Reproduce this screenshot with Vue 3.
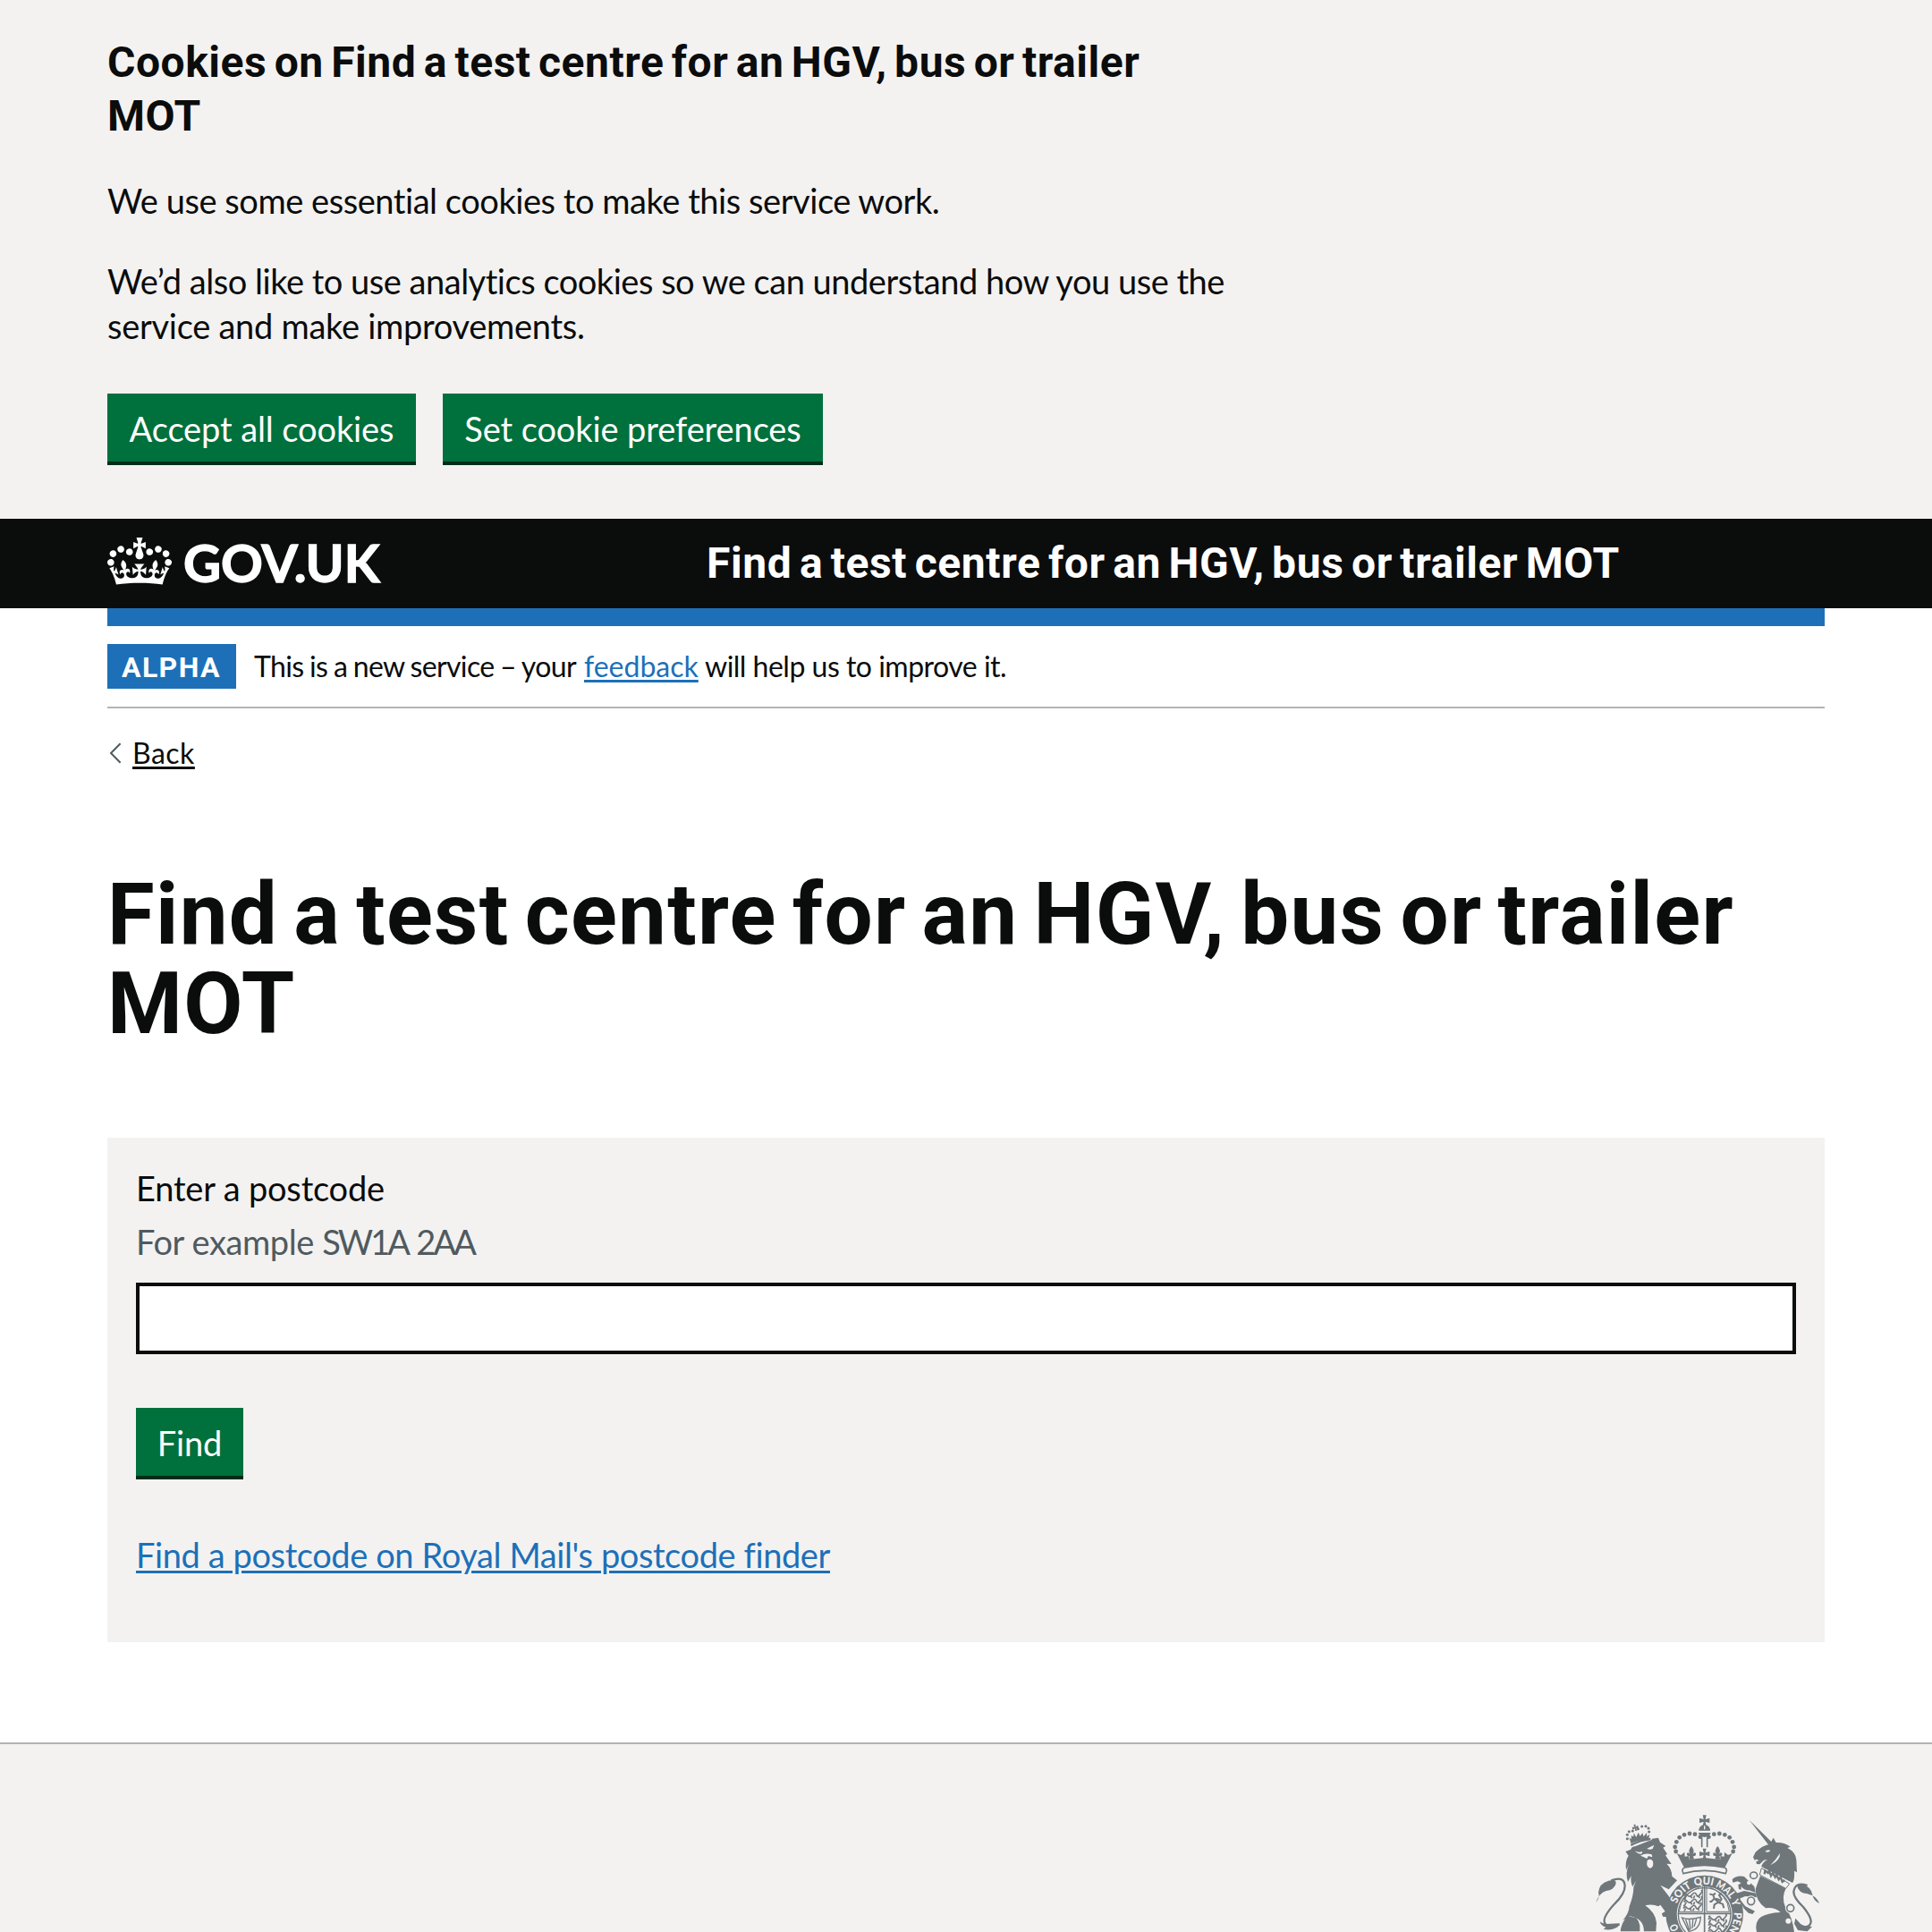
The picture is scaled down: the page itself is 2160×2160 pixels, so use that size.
<script setup>
const serviceName = 'Find a test centre for an HGV, bus or trailer MOT'

// Pearls of the royal crown, left half; the right half is mirrored
const pearls = [[423, 131], [405, 122], [387, 120], [369, 124], [353, 133], [343, 148], [338, 165], [341, 180]]
const lionPearls = [[178, 137], [178, 124], [184, 113], [196, 111], [214, 104], [227, 96], [240, 95], [249, 102], [251, 114]]

// Motto words: offset along the garter, and length
const motto = [
  { word: 'O', at: 102, length: 23 },
  { word: 'SOIT', at: 190, length: 76 },
  { word: 'QUI', at: 277, length: 62 },
  { word: 'MAL', at: 347, length: 66 },
  { word: 'Y', at: 419, length: 22 },
  { word: 'PEN', at: 460, length: 66 }
]
</script>

<template>
  <div class="page">
    <section class="cookies">
      <h2>Cookies on Find a test centre for an HGV, bus or trailer<br>MOT</h2>
      <p class="c1">We use some essential cookies to make this service work.</p>
      <p class="c2">We’d also like to use analytics cookies so we can understand how you use the<br><span class="c3">service and make improvements.</span></p>
      <div class="actions">
        <button class="button accept">Accept all cookies</button>
        <button class="button prefs">Set cookie preferences</button>
      </div>
    </section>

    <header class="header">
      <a class="logo">
        <svg class="crown" viewBox="0 0 132 97" width="72" height="53" fill="#fff" fill-rule="evenodd">
          <path d="M25 30.2c3.5 1.5 7.7-.2 9.1-3.7 1.5-3.6-.2-7.8-3.9-9.2-3.6-1.4-7.6.3-9.1 3.9-1.4 3.5.3 7.5 3.9 9zM9 39.5c3.6 1.5 7.8-.2 9.2-3.7 1.5-3.6-.2-7.8-3.9-9.1-3.6-1.5-7.6.2-9.1 3.8-1.4 3.5.3 7.5 3.8 9zM4.4 57.2c3.5 1.5 7.7-.2 9.1-3.8 1.5-3.6-.2-7.7-3.9-9.1-3.5-1.5-7.6.3-9.1 3.8-1.4 3.5.3 7.6 3.9 9.1zm38.3-21.4c3.5 1.5 7.7-.2 9.1-3.8 1.5-3.6-.2-7.7-3.9-9.1-3.6-1.5-7.6.3-9.1 3.8-1.3 3.6.4 7.7 3.9 9.1zm64.4-5.6c-3.6 1.5-7.8-.2-9.1-3.7-1.5-3.6.2-7.8 3.8-9.2 3.6-1.4 7.7.3 9.2 3.9 1.3 3.5-.4 7.5-3.9 9zm15.9 9.3c-3.6 1.5-7.7-.2-9.1-3.7-1.5-3.6.2-7.8 3.7-9.1 3.6-1.5 7.7.2 9.2 3.8 1.5 3.5-.3 7.5-3.8 9zm4.7 17.7c-3.6 1.5-7.8-.2-9.2-3.8-1.5-3.6.2-7.7 3.9-9.1 3.6-1.5 7.7.3 9.2 3.8 1.3 3.5-.4 7.6-3.9 9.1zM89.3 35.8c-3.6 1.5-7.8-.2-9.2-3.8-1.4-3.6.2-7.7 3.9-9.1 3.6-1.5 7.7.3 9.2 3.8 1.4 3.6-.3 7.7-3.9 9.1zM69.7 17.7l8.9 4.7V9.3l-8.9 2.8c-.2-.3-.5-.6-.9-.9L72.4 0H59.6l3.5 11.2c-.3.3-.6.5-.9.9l-8.8-2.8v13.1l8.8-4.7c.3.3.6.7.9.9l-5 15.4v.1c-.2.8-.4 1.6-.4 2.4 0 4.1 3.1 7.5 7 8.1h.2c.3 0 .7.1 1 .1.4 0 .7 0 1-.1h.2c4-.6 7.1-4.1 7.1-8.1 0-.8-.1-1.7-.4-2.4V34l-5.1-15.4c.4-.2.7-.6 1-.9zM66 92.8c16.9 0 32.8 1.1 47.1 3.2 4-16.9 8.9-26.7 14-33.5l-9.6-3.4c1 4.9 1.1 7.2 0 10.2-1.5-1.4-3-4.3-4.2-8.7L108.6 76c2.8-2 5-3.2 7.5-3.3-4.4 9.4-10 11.9-13.6 11.2-4.3-.8-6.3-4.6-5.6-7.9 1-4.7 5.7-5.9 8-.5 4.3-8.7-3-11.4-7.6-8.8 7.1-7.2 7.9-13.5 2.1-21.1-8 6.1-8.1 12.3-4.5 20.8-4.7-5.4-12.1-2.5-9.5 6.2 3.4-5.2 7.9-2 7.2 3.1-.6 4.3-6.4 7.8-13.5 7.2-10.3-.9-10.9-8-11.2-13.8 2.5-.5 7.1 1.8 11 7.3L80.2 60c-4.1 4.4-8 5.3-12.3 5.4 1.4-4.4 8-11.6 8-11.6H55.5s6.4 7.2 7.9 11.6c-4.2-.1-8-1-12.3-5.4l1.4 16.4c3.9-5.5 8.5-7.7 10.9-7.3-.3 5.8-.9 12.8-11.1 13.8-7.2.6-12.9-2.9-13.5-7.2-.7-5 3.8-8.3 7.1-3.1 2.7-8.7-4.6-11.6-9.4-6.2 3.7-8.5 3.6-14.7-4.6-20.8-5.8 7.6-5 13.9 2.2 21.1-4.7-2.6-11.9.1-7.7 8.8 2.3-5.5 7.1-4.2 8.1.5.7 3.3-1.3 7.1-5.7 7.9-3.5.7-9-1.8-13.5-11.2 2.5.1 4.7 1.3 7.5 3.3l-4.7-15.4c-1.2 4.4-2.7 7.2-4.3 8.7-1.1-3-.9-5.3 0-10.2l-9.5 3.4c5 6.9 9.9 16.7 14 33.5 14.8-2.1 30.8-3.2 47.7-3.2z" />
        </svg>
        <span>GOV.UK</span>
      </a>
      <a class="service">{{ serviceName }}</a>
    </header>

    <div class="container">
      <div class="bar"></div>
      <div class="phase">
        <strong>ALPHA</strong>
        <span class="f1">This is a new service – your</span>
        <a class="link f2">feedback</a>
        <span class="f3">will help us to improve it.</span>
      </div>
      <div class="back">
        <svg width="16" height="26" viewBox="0 0 16 26" fill="none" stroke="#505a5f" stroke-width="2"><path d="M14.6 2.2 4 13l10.6 10.8" /></svg>
        <a>Back</a>
      </div>

      <h1>Find a test centre for an HGV, bus or trailer<br>MOT</h1>

      <form class="panel" @submit.prevent>
        <label for="postcode">Enter a postcode</label>
        <div class="hint">For example <span>SW1A 2AA</span></div>
        <input id="postcode" type="text">
        <button class="button find">Find</button>
        <a class="link finder">Find a postcode on Royal Mail's postcode finder</a>
      </form>
    </div>

    <footer class="footer">
      <svg class="crest" viewBox="0 0 900 450" width="300" height="150">
        <defs>
          <path id="garter" d="M437 489a99 99 0 0 1 0-198a99 99 0 0 1 0 198" />
          <g id="cross"><path d="M-6-18H6L3-4 17-8V8L3 4 6 18H-6L-3 4-17 8V-8L-3-4z" /></g>
          <g id="fleur"><path d="M0-20Q13-6 4 7Q10-2 15 4Q17 14 6 14L9 24H-9L-6 14Q-17 14-15 4Q-10-2-4 7Q-13-6 0-20z" /></g>
          <g id="beast" fill="none" stroke="#6f777b" stroke-width="5"><path d="M-30 4q5-10 12-2t16-3 14 1 14-4M-22 4l-5 9M-8 3l5 9M6 3l-4 9M17 2l6 9M-30-5l7-3M26-4q8-6 2-12" /></g>
        </defs>

        <!-- lion -->
        <g fill="#6f777b">
          <circle v-for="([x, y], i) in lionPearls" :key="i" :cx="x" :cy="y" r="4.6" />
          <use href="#cross" transform="translate(205 100) rotate(-16) scale(.6)" />
          <path d="M184 133l8 6-1-12 8 3 1-12 8 14 7-16 6 12 8-10 4 12 10-13 1 13 9-8-4 20Q214 139 191 154z" />
          <path d="M190 159Q220 142 256 138" fill="none" stroke="#6f777b" stroke-width="7" />
          <path d="M172 180l18-7q2-9 14-10l46-18 10-4 1-4 21-3 6 15 19 13-9 5 14 21-6 5 20 29-16-1q18 18 18 42l17 14-28 30-28-14 26 34q24 30 32 62l4 14-8 2-6 16-9 2-4-10-12-2-2-12-12 0-4-9-14 0-2-14 10-4-6-8q-20-9-44-3 34 23 38 58l-2 29H155q2-22 16-42l-8 4q20-20 22-46 14-36 14-64l8-22-11 20q-8-16-5-36l-11 20q-10-30 4-60l-10 20q-4-30 8-48z" />
          <path d="M72 352q16-20 9-34 2-31 34-40 30-8 24 12-6 18-32 22-24 8-35 40z" />
          <path d="M124 277q44-16 46 18 0 28-34 60-42 46-34 64 8 18 50 6" fill="none" stroke="#6f777b" stroke-width="7" />
          <path d="M86 415q8 8 22 8l44-2-6 12q-18 13-48 8l8-7q-16-4-20-19z" />
        </g>
        <path d="M204 178q12 8 25 1l-3 9q-14 1-22-10zM244 170l24-12-5 13q-10 5-19-1zM222 194q18-11 38-4l2 9-14-4-4 9q-10-6-22-10zM245 210q12-9 19 3 4 20-9 23-15-2-10-26zM267 374l22-15 16 22-10 6-8 12zM182 398q32-4 38 30l0 22h14q0-50-52-52z" fill="#f3f2f1" />

        <!-- royal crown -->
        <g fill="#6f777b">
          <use href="#cross" x="437" y="76" />
          <path d="M418 108a19 19 0 0 1 17-17v17zM439 91a19 19 0 0 1 17 17h-17zM416 117h42q-6 14-21 15-15-1-21-15z" />
          <path d="M418 108h38M428 134v32M446 134v32" stroke="#6f777b" stroke-width="5" />
          <g v-for="([x, y], i) in pearls" :key="i">
            <circle :cx="x" :cy="y" r="7.2" />
            <circle :cx="874 - x" :cy="y" r="7.2" />
          </g>
          <use href="#fleur" x="393" y="182" />
          <use href="#fleur" x="481" y="182" />
          <use href="#cross" x="437" y="188" />
          <path d="M344 186l14 6 12-10 1 15 13-2v12l53-6 53 6v-12l13 2 1-15 12 10 14-6-26 50q-67-14-134 0z" />
        </g>

        <!-- garter and shield -->
        <circle cx="437" cy="390" r="130" fill="#6f777b" />
        <circle cx="437" cy="390" r="93" fill="#f3f2f1" />
        <path d="M370 234q67-16 134 0 12 5 4 20-71-20-142 0-8-15 4-20z" fill="#f3f2f1" stroke="#6f777b" stroke-width="5" />
        <g fill="none" stroke="#6f777b" stroke-width="5">
          <path d="M437 284V450M350 388H526" />
          <path d="M430 382H352q4-60 78-88zM444 382h76q-4-60-76-88z" stroke-width="3" />
          <circle cx="437" cy="390" r="88" stroke-width="4" />
        </g>
        <text class="motto" fill="#f3f2f1">
          <textPath v-for="m in motto" :key="m.word" href="#garter" :startOffset="m.at" :textLength="m.length" lengthAdjust="spacingAndGlyphs">{{ m.word }}</textPath>
        </text>
        <use href="#beast" x="398" y="325" />
        <use href="#beast" x="398" y="346" />
        <use href="#beast" x="396" y="367" />
        <use href="#beast" x="480" y="404" />
        <use href="#beast" x="480" y="424" />
        <use href="#beast" x="480" y="444" />
        <g fill="none" stroke="#6f777b" stroke-width="4">
          <path d="M454 322l12 4 4 12 16 14 12 4 4 14M470 338l-10 10-6 0M484 350l-14 8-2 14M486 352l8-12-8-14 8-6M466 326l8-6M474 338l14 4" stroke-width="6" />
          <path d="M362 402q22 10 62-2-2 44-40 48zM374 408l12 36M386 408l4 34M398 408l-2 30M410 406l-8 26" />
        </g>

        <!-- unicorn -->
        <g fill="#6f777b">
          <path d="M587 74l77 76-12 8z" />
          <path d="M600 199l8-17q22-22 48-27l12-21 9 16q28-2 48 14l-10 4q28 14 30 40l2 42-9-5q2 30-6 40l-104-54q2-14 20-24l-12 2-14 14-10-1-2-8 10-4-9-4-6 3z" />
          <path d="M624 262l86 42q-16 30-2 62 24 34 30 84H612q-8-34 14-50 22-14 66-16-20-18-50-14-34-24-34-64z" />
          <path d="M530 274q14-15 40-10l34 34 4 20-22-8q-14 2-26-12l0 10-8-2-2-14 10-6-12-6-16 4zM540 322l30-10 40 8 2 14-38-4-20 8 20 26 32 16-8 10-14-4-14-14-14-24z" />
          <path d="M822 354q-20-8-24-32-4-22-30-32-22-4-20 6 4 22 34 26 30 6 40 32z" />
          <path d="M782 294q-42-14-46 22 0 20 32 50 36 44 22 60-10 14-34 0" fill="none" stroke="#6f777b" stroke-width="7" />
          <path d="M798 432l-34-4-22-24-4 18 12 22 32 4z" />
        </g>
        <path d="M628 236l94 52-12 16-88-46z" fill="#f3f2f1" stroke="#6f777b" stroke-width="3" />
        <path d="M638 256l2-12 10 8 4-8 6 18 6-10 8 14 4-8 8 16 6-8 6 16 8-6" fill="none" stroke="#6f777b" stroke-width="7" />
        <path d="M640 180q10-9 18-3-6 8-18 3zM690 186q2 24-32 40 20-20 32-40z" fill="#f3f2f1" />
        <g fill="none" stroke="#f3f2f1" stroke-width="11">
          <ellipse cx="602" cy="260" rx="12" ry="11" />
          <ellipse cx="593" cy="346" rx="12" ry="13" />
          <ellipse cx="725" cy="370" rx="12" ry="12" />
        </g>
        <g fill="none" stroke="#6f777b" stroke-width="5">
          <ellipse cx="602" cy="260" rx="12" ry="11" />
          <ellipse cx="593" cy="346" rx="12" ry="13" />
          <ellipse cx="725" cy="370" rx="12" ry="12" />
        </g>
        <circle cx="718" cy="413" r="9" fill="#f3f2f1" />
        <circle cx="586" cy="285" r="7" fill="#f3f2f1" />
      </svg>
    </footer>
  </div>
</template>

<style>
body {
  margin: 0;
  background: #fff;
}
</style>

<style scoped>
.page {
  height: 2160px;
  overflow: hidden;
  display: flex;
  flex-direction: column;
  color: #0b0c0c;
  font: 400 38px/50px Lato, "Open Sans", sans-serif;
  font-variant-ligatures: none;
}
h1, h2, p {
  margin: 0;
}
h1, h2, .service, .phase strong {
  font-family: Roboto, Lato, sans-serif;
  font-weight: 700;
}
.cookies {
  box-sizing: border-box;
  height: 580px;
  padding: 40px 120px 0;
  background: #f3f2f1;
}
h2 {
  font-size: 48px;
  line-height: 60px;
  letter-spacing: .53px;
  word-spacing: -4px;
  margin-bottom: 39px;
}
.c1 {
  letter-spacing: -.45px;
  margin-bottom: 40px;
}
.c2 { letter-spacing: -.48px; }
.c3 { letter-spacing: -.28px; }
.actions {
  display: flex;
  gap: 30px;
  margin-top: 51px;
}
.button {
  box-sizing: border-box;
  height: 80px;
  padding: 12px 0 10px;
  border: 0;
  border-bottom: 4px solid #002d18;
  background: #00703c;
  color: #fff;
  font: inherit;
  letter-spacing: -.1px;
  white-space: nowrap;
}
.accept { width: 345px; }
.prefs { width: 425px; }
.find { width: 120px; }
.header {
  height: 100px;
  display: flex;
  align-items: flex-start;
  padding: 0 120px;
  background: #0b0c0c;
  color: #fff;
}
.logo {
  width: 670px;
  display: flex;
  align-items: flex-start;
}
.crown { margin-top: 21px; }
.logo span {
  margin-left: 13px;
  font-size: 58px;
  font-weight: 700;
  line-height: 97px;
  -webkit-text-stroke: 1.4px #fff;
}
.service {
  margin-top: 20px;
  font-size: 48px;
  line-height: 60px;
  letter-spacing: .6px;
  word-spacing: -4px;
  white-space: nowrap;
}
.container {
  margin: 0 120px;
}
.bar {
  height: 20px;
  background: #1d70b8;
}
.phase {
  height: 50px;
  padding: 20px 0;
  border-bottom: 2px solid #b1b4b6;
  display: flex;
  align-items: center;
  font-size: 32px;
  line-height: 42px;
}
.phase strong {
  box-sizing: border-box;
  width: 144px;
  height: 50px;
  padding: 1px 0 0 16px;
  margin-right: 20px;
  background: #1d70b8;
  color: #fff;
  line-height: 50px;
  letter-spacing: 1.4px;
}
.link {
  color: #1d70b8;
  text-decoration: underline;
  text-decoration-thickness: 3px;
  text-underline-offset: 3px;
}
.f1 {
  width: 369px;
  letter-spacing: -.63px;
  word-spacing: -1px;
  white-space: nowrap;
}
.f2 { width: 135px; }
.f3 { letter-spacing: -.5px; }
.back {
  display: flex;
  align-items: center;
  height: 40px;
  margin-top: 30px;
  font-size: 32px;
  line-height: 40px;
}
.back svg { margin-right: 12px; }
.back a {
  letter-spacing: .5px;
  text-decoration: underline;
  text-decoration-thickness: 3px;
  text-underline-offset: 3px;
}
h1 {
  margin-top: 110px;
  font-size: 96px;
  line-height: 100px;
  letter-spacing: 1.3px;
  word-spacing: -8px;
}
.panel {
  box-sizing: border-box;
  height: 564px;
  margin-top: 100px;
  padding: 31px 32px 0;
  display: flex;
  flex-direction: column;
  align-items: flex-start;
  background: #f3f2f1;
}
label {
  letter-spacing: -.18px;
}
.hint {
  margin-top: 10px;
  color: #505a5f;
  letter-spacing: -.4px;
}
.hint span {
  letter-spacing: -3px;
  word-spacing: 4px;
}
input {
  box-sizing: border-box;
  width: 100%;
  height: 80px;
  margin: 21px 0 60px;
  border: 4px solid #0b0c0c;
  border-radius: 0;
  background: #fff;
  font: inherit;
}
.finder {
  margin-top: 59px;
  letter-spacing: -.4px;
}
.footer {
  flex: 1;
  display: flex;
  justify-content: flex-end;
  margin-top: 112px;
  padding: 60px 100px 0 0;
  border-top: 2px solid #b1b4b6;
  background: #f3f2f1;
}
.crest {
  flex: none;
}
.motto {
  font: 900 36px Lato, sans-serif;
}
</style>
